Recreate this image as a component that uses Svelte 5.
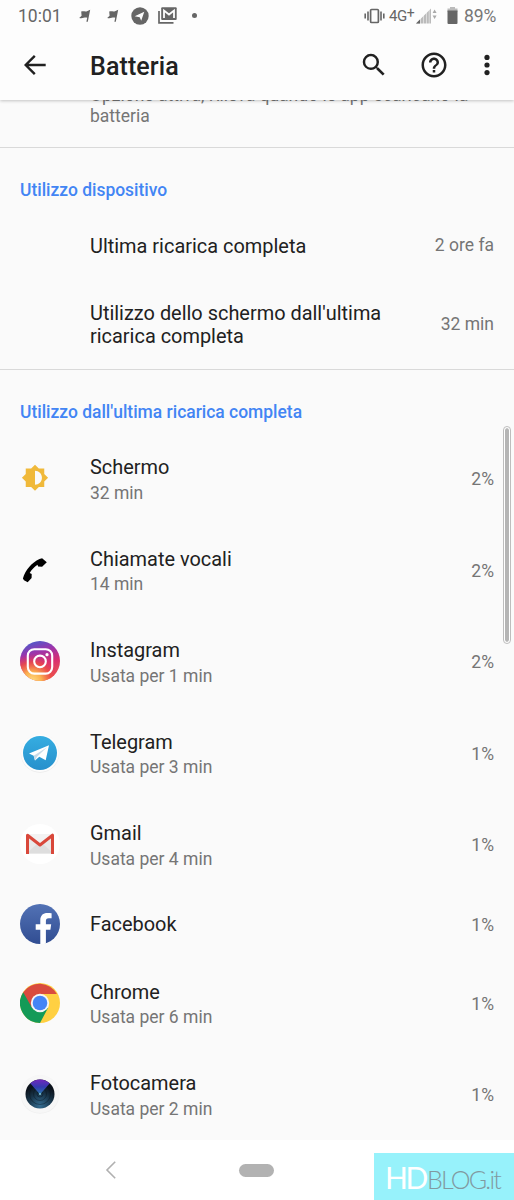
<script lang="ts">
	interface Usage {
		icon: string;
		name: string;
		detail?: string;
		percent: string;
	}

	const usages: Usage[] = [
		{ icon: "screen", name: "Schermo", detail: "32 min", percent: "2%" },
		{ icon: "call", name: "Chiamate vocali", detail: "14 min", percent: "2%" },
		{ icon: "instagram", name: "Instagram", detail: "Usata per 1 min", percent: "2%" },
		{ icon: "telegram", name: "Telegram", detail: "Usata per 3 min", percent: "1%" },
		{ icon: "gmail", name: "Gmail", detail: "Usata per 4 min", percent: "1%" },
		{ icon: "facebook", name: "Facebook", percent: "1%" },
		{ icon: "chrome", name: "Chrome", detail: "Usata per 6 min", percent: "1%" },
		{ icon: "camera", name: "Fotocamera", detail: "Usata per 2 min", percent: "1%" },
	];
</script>

<div class="screen">
	<header>
		<div class="status">
			<span class="clock">10:01</span>
			{#each [0, 1] as flag (flag)}
				<svg class="flag" width="12" height="14" viewBox="0 0 12 14">
					<path d="M2.200 2.500c2.300-.8 4 .5 5.800-.3L11.200.8 8.800 12.800H7.400l.8-4c-2.400-.7-4.200.9-8 .2l2.400-2.300z" fill="#666" />
				</svg>
			{/each}
			<svg class="plane" width="18" height="18" viewBox="0 0 18 18">
				<circle cx="9" cy="9" r="8.700" fill="#666" />
				<path d="M3.700 9.200 13.300 4.700 10.200 13.800 8.700 10.300z" fill="#fdfdfd" />
			</svg>
			<svg class="mail" width="19" height="17" viewBox="0 0 19 17">
				<path d="M1 4v11.800h14.500" fill="none" stroke="#666" stroke-width="1.700" />
				<rect x="3.200" y=".3" width="15.500" height="12.700" rx="1" fill="#666" />
				<path d="M6 11V3.500l5 4 5-4V11" fill="none" stroke="#fdfdfd" stroke-width="1.800" />
			</svg>
			<span class="dot"></span>
			<svg class="vibrate" width="21" height="16" viewBox="0 0 21 16">
				<rect x="6.600" y="1.500" width="7.800" height="13" rx="1" fill="none" stroke="#666" stroke-width="1.700" />
				<path d="M4 3.500v9M1.200 5.500v5M17 3.500v9M19.800 5.500v5" stroke="#666" stroke-width="1.600" />
			</svg>
			<span class="network">4G<sup>+</sup></span>
			<svg class="signal" width="22" height="16" viewBox="0 0 22 16">
				<path d="M0 15.500 15 .5v15z" fill="#bbb" />
				<path d="M0 15.500 4 11.500v4z" fill="#666" />
				<path d="M4.500 3v13M7.500 1v15M10.500 0v16M13.200 0v16" stroke="#fdfdfd" stroke-width=".5" />
				<path d="m16.600 5 2-3.500 2 3.500zM16.600 7.500l2 3.500 2-3.500z" fill="#aaa" />
			</svg>
			<svg class="battery" width="11" height="17" viewBox="0 0 11 17">
				<path d="M3 0h5v1.500h2.500V5H.5V1.500H3z" fill="#bbb" />
				<path d="M.5 3.500h10V16a1 1 0 0 1-1 1h-8a1 1 0 0 1-1-1z" fill="#666" />
			</svg>
			<span class="level">89%</span>
		</div>
		<div class="toolbar">
			<svg class="back" width="30" height="30" viewBox="0 0 30 30">
				<path d="M25.700 15H6M14.800 5.900 5.700 15l9.100 9.100" fill="none" stroke="#212121" stroke-width="2.400" />
			</svg>
			<h1>Batteria</h1>
			<svg class="search" width="30" height="30" viewBox="0 0 24 24">
				<path d="M15.500 14h-.79l-.28-.27A6.470 6.470 0 0 0 16 9.500 6.500 6.500 0 1 0 9.500 16c1.610 0 3.090-.59 4.230-1.570l.27.28v.79l5 4.990L20.490 19zm-6 0C7.010 14 5 11.990 5 9.500S7.010 5 9.500 5 14 7.010 14 9.500 11.990 14 9.500 14z" fill="#212121" />
			</svg>
			<svg class="help" width="30" height="30" viewBox="0 0 24 24">
				<path d="M11 18h2v-2h-2zm1-16C6.480 2 2 6.480 2 12s4.480 10 10 10 10-4.480 10-10S17.520 2 12 2zm0 18c-4.410 0-8-3.590-8-8s3.590-8 8-8 8 3.590 8 8-3.590 8-8 8zm0-14c-2.210 0-4 1.790-4 4h2c0-1.100.9-2 2-2s2 .9 2 2c0 2-3 1.750-3 5h2c0-2.250 3-2.500 3-5 0-2.210-1.790-4-4-4z" fill="#212121" />
			</svg>
			<svg width="8" height="22" viewBox="0 0 8 22">
				<circle cx="4" cy="3.400" r="2.600" fill="#212121" />
				<circle cx="4" cy="11" r="2.600" fill="#212121" />
				<circle cx="4" cy="18.600" r="2.600" fill="#212121" />
			</svg>
		</div>
	</header>

	<main>
		<p class="note">Opzione attiva, Rileva quando le app scaricano la batteria</p>

		<section>
			<h2>Utilizzo dispositivo</h2>
			<div class="row single">
				<span class="title">Ultima ricarica completa</span>
				<span class="value">2 ore fa</span>
			</div>
			<div class="row wrapped">
				<span class="title">Utilizzo dello schermo dall'ultima ricarica completa</span>
				<span class="value">32 min</span>
			</div>
		</section>

		<section>
			<h2>Utilizzo dall'ultima ricarica completa</h2>
			{#each usages as usage (usage.name)}
				<div class="row" class:single={!usage.detail}>
					<div class="icon">
						{#if usage.icon === "screen"}
							<svg width="30" height="30" viewBox="0 0 24 24">
								<path d="M20 15.310 23.310 12 20 8.690V4h-4.690L12 .69 8.690 4H4v4.690L.69 12 4 15.310V20h4.690L12 23.310 15.310 20H20zM12 18V6c3.310 0 6 2.690 6 6s-2.690 6-6 6z" fill="#f0b93a" transform="translate(.9 .7) scale(.925)" />
							</svg>
						{:else if usage.icon === "call"}
							<svg width="30" height="30" viewBox="0 0 30 30">
								<path d="M2.900 23.400C5.500 15 11.500 8 19.500 4.100l2.600-.9 4.700 4.100-4.700 4.500-4-.2-.6-1.800c-3.300 2-5.800 4.900-7.800 8.300l2 .8-.1 4.100-3.900 4.300L4 25.300z" fill="#000" />
							</svg>
						{:else if usage.icon === "instagram"}
							<svg width="40" height="40" viewBox="0 0 40 40">
								<defs>
									<linearGradient id="ig-base" x1=".3" y1="0" x2=".6" y2="1">
										<stop offset="0" stop-color="#4b5bcb" />
										<stop offset=".28" stop-color="#9a35ad" />
										<stop offset=".6" stop-color="#d92f70" />
										<stop offset="1" stop-color="#ee5b48" />
									</linearGradient>
									<radialGradient id="ig-glow" cx=".3" cy="1.020" r=".7">
										<stop offset="0" stop-color="#ffe185" />
										<stop offset=".35" stop-color="#fbb150" />
										<stop offset=".7" stop-color="#ec4b46" stop-opacity=".8" />
										<stop offset="1" stop-color="#d92f70" stop-opacity="0" />
									</radialGradient>
								</defs>
								<circle cx="20" cy="20" r="20" fill="url(#ig-base)" />
								<circle cx="20" cy="20" r="20" fill="url(#ig-glow)" />
								<rect x="7.800" y="8.200" width="24.400" height="24.400" rx="6.500" fill="none" stroke="#fff" stroke-width="2.100" />
								<circle cx="20" cy="20.400" r="5.800" fill="none" stroke="#fff" stroke-width="2.100" />
								<circle cx="27" cy="13.700" r="1.600" fill="#fff" />
							</svg>
						{:else if usage.icon === "telegram"}
							<svg width="40" height="40" viewBox="0 0 40 40">
								<defs>
									<linearGradient id="tg" x1="0" y1="0" x2="0" y2="1">
										<stop offset="0" stop-color="#35ade1" />
										<stop offset="1" stop-color="#2790cc" />
									</linearGradient>
								</defs>
								<circle cx="20" cy="20.500" r="19.200" fill="#eaeaea" />
								<circle cx="20" cy="20" r="19" fill="#fcfcfc" />
								<circle cx="20" cy="20" r="17" fill="url(#tg)" />
								<path d="M9 20.500 29 12.300 25.700 27.300 19.300 23.800 15 27.500 13.700 22.700z" fill="#fff" />
								<path d="M13.700 22.700 27 14.200 17 23.700 15 27.500z" fill="#c8dae7" />
							</svg>
						{:else if usage.icon === "gmail"}
							<svg width="40" height="40" viewBox="0 0 40 40">
								<circle cx="20" cy="20" r="20" fill="#fff" />
								<path d="M7 10h26v20H7z" fill="#e9e9e9" />
								<path d="M7 29 17 20l3 2 3-2 10 9z" fill="#dedede" />
								<path d="m8 10 12 9 12-9z" fill="#f3f3f3" />
								<path d="M7.500 30V11.200L20 21l12.500-9.800V30" fill="none" stroke="#d9483b" stroke-width="3" stroke-linejoin="round" />
							</svg>
						{:else if usage.icon === "facebook"}
							<svg width="40" height="40" viewBox="0 0 40 40">
								<defs>
									<linearGradient id="fb" x1="0" y1="0" x2="0" y2="1">
										<stop offset="0" stop-color="#5272b5" />
										<stop offset="1" stop-color="#314d92" />
									</linearGradient>
								</defs>
								<circle cx="20" cy="20" r="20" fill="url(#fb)" />
								<path d="M20.300 40V25.800h-4.600v-5.500h4.600v-4c0-4.800 2.700-7.300 7.200-7.300 1.900 0 3.500.2 4.100.3v4.900h-2.800c-2.400 0-2.900 1.100-2.900 2.800v3.300h5.300l-.8 5.500h-4.500v13.600q-2.500.8-5.600.6z" fill="#fff" />
							</svg>
						{:else if usage.icon === "chrome"}
							<svg width="40" height="40" viewBox="0 0 40 40">
								<circle cx="20" cy="20" r="20" fill="#ffd042" />
								<path d="M20 20 3.200 9.200A20 20 0 0 0 20 40l8-15z" fill="#149a57" />
								<path d="M20 20 11.800 24.500 3.200 9.200A20 20 0 0 1 36.900 11H20z" fill="#d94b3e" />
								<circle cx="20" cy="20" r="9.200" fill="#f5f5f5" />
								<circle cx="20" cy="20" r="7.300" fill="#4585f5" />
							</svg>
						{:else}
							<svg width="40" height="40" viewBox="0 0 40 40">
								<defs>
									<radialGradient id="lens" cx=".5" cy=".9" r=".7">
										<stop offset="0" stop-color="#356d92" />
										<stop offset=".6" stop-color="#183448" />
										<stop offset="1" stop-color="#0b121b" />
									</radialGradient>
									<linearGradient id="flare" x1="0" y1="0" x2="0" y2="1">
										<stop offset="0" stop-color="#7128bd" />
										<stop offset=".5" stop-color="#353ab0" />
										<stop offset="1" stop-color="#277da8" />
									</linearGradient>
								</defs>
								<circle cx="20" cy="20.500" r="19.300" fill="#f0f0f0" />
								<circle cx="20" cy="20" r="19" fill="#f7f7f7" />
								<circle cx="20" cy="20" r="14.500" fill="url(#lens)" />
								<g fill="none" stroke="#08111b" stroke-opacity=".4">
									<circle cx="20" cy="20" r="10.500" />
									<circle cx="20" cy="20" r="6.500" />
									<circle cx="20" cy="20" r="3" />
								</g>
								<path d="M20 20.500 10.200 9.300a14.500 14.500 0 0 1 19.600 0z" fill="url(#flare)" />
								<circle cx="20" cy="20" r=".9" fill="#8ed3df" />
							</svg>
						{/if}
					</div>
					<div class="text">
						<span class="title">{usage.name}</span>
						{#if usage.detail}
							<span class="detail">{usage.detail}</span>
						{/if}
					</div>
					<span class="value">{usage.percent}</span>
				</div>
			{/each}
		</section>
		<div class="scrollbar"></div>
	</main>

	<nav>
		<svg class="nav-back" width="12" height="20" viewBox="0 0 12 20">
			<path d="M10.200 1.700 2 10l8.200 8.300" fill="none" stroke="#b0b0b0" stroke-width="1.600" />
		</svg>
		<span class="home"></span>
		<div class="watermark">
			<span class="hd">HD</span>
			<span class="blog">BLOG.it</span>
		</div>
	</nav>
</div>

<style>
:global(body) {
	margin: 0;
}
.screen {
	width: 514px;
	height: 1200px;
	display: flex;
	flex-direction: column;
	overflow: hidden;
	background: #fafafa;
	color: #212121;
	font-family: Roboto, sans-serif;
}
svg {
	display: block;
	flex: none;
}
header {
	height: 100px;
	flex: none;
	background: #fdfdfd;
	box-shadow: 0 1px 3px rgba(0, 0, 0, 0.22);
	position: relative;
	z-index: 1;
}
.status {
	height: 31px;
	display: flex;
	align-items: center;
	padding: 0 18px 0 18px;
	color: #666;
	font-size: 17.5px;
}
.clock {
	width: 61px;
}
.flag {
	margin-right: 16px;
}
.flag + .plane {
	margin-left: -4px;
}
.mail {
	margin-left: 9px;
}
.dot {
	width: 5px;
	height: 5px;
	border-radius: 50%;
	background: #666;
	margin-left: 15px;
}
.vibrate {
	margin-left: auto;
}
.network {
	width: 27px;
	margin-left: 4px;
	font-size: 15px;
	letter-spacing: -0.5px;
	white-space: nowrap;
}
sup {
	font-size: 14px;
	line-height: 0;
	vertical-align: 3px;
}
.battery {
	margin: 0 6px 0 9px;
}
.level {
	color: #777;
	letter-spacing: -0.2px;
}
.toolbar {
	height: 67px;
	display: flex;
	align-items: center;
	padding: 0 23px 0 20px;
	box-sizing: border-box;
}
h1 {
	margin: 4px auto 0 40px;
	font-size: 25px;
	line-height: 30px;
	font-weight: 500;
	letter-spacing: 0.1px;
}
.help {
	margin: 0 34px 0 30px;
}
main {
	flex: 1;
	min-height: 0;
	position: relative;
}
.note {
	height: 61.5px;
	margin: -15px 0 0;
	padding: 0 40px 0 90px;
	color: #757575;
	font-size: 17.5px;
	line-height: 20.5px;
}
section {
	border-top: 1.5px solid #d9d9d9;
}
h2 {
	height: 64px;
	box-sizing: border-box;
	margin: 0;
	padding: 32px 20px 0;
	color: #4285f4;
	font-size: 17.45px;
	line-height: 21px;
	font-weight: 500;
}
.row {
	height: 91.5px;
	box-sizing: border-box;
	display: flex;
	align-items: center;
	padding: 0 20px;
}
.row.single {
	height: 67px;
}
.row.wrapped {
	height: 90px;
}
.row > .title {
	width: 310px;
	padding: 2px 0 0 70px;
}
.icon {
	width: 70px;
	flex: none;
	margin-top: -2px;
}
.text {
	display: flex;
	flex-direction: column;
}
.title {
	margin-top: 1px;
	font-size: 19.93px;
	line-height: 23.5px;
}
.detail {
	margin-top: 3px;
	color: #757575;
	font-size: 17.5px;
	line-height: 21px;
}
.value {
	margin-left: auto;
	color: #757575;
	font-size: 17.5px;
}
/* lies over the right edge of the list */
.scrollbar {
	position: absolute;
	top: 326px;
	right: 3px;
	width: 4px;
	height: 214px;
	border: 1px solid #bdbdbd;
	border-radius: 4px;
	padding: 1px;
	background: #b5b5b5 content-box;
	box-shadow: inset 0 0 0 1px #fff;
}
nav {
	height: 60px;
	flex: none;
	display: flex;
	align-items: center;
	background: #fff;
}
.nav-back {
	margin-left: 105px;
}
.home {
	width: 35px;
	height: 13px;
	border-radius: 7px;
	background: #b2b2b2;
	margin-left: 122px;
}
.watermark {
	width: 140px;
	height: 47px;
	box-sizing: border-box;
	padding: 5px 0 0 11px;
	margin-left: auto;
	align-self: flex-end;
	display: flex;
	align-items: baseline;
	background: #97f2fb;
	font-family: Lato, sans-serif;
	line-height: 38px;
	white-space: nowrap;
}
.hd {
	width: 42px;
	color: #fff;
	font-size: 30px;
	letter-spacing: -2.4px;
}
.blog {
	color: #8199a0;
	font-size: 25px;
	font-weight: 300;
	letter-spacing: -1.8px;
}
</style>
